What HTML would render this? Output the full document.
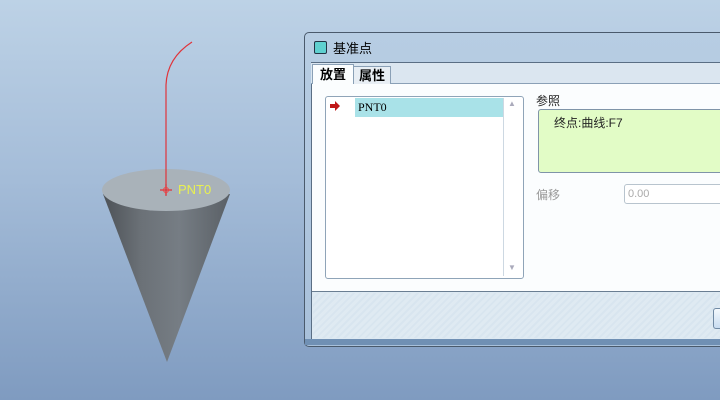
<!DOCTYPE html>
<html><head><meta charset="utf-8"><style>
body{margin:0;width:720px;height:400px;overflow:hidden;position:relative;background:linear-gradient(#bdd2e6 0%,#a4bcd8 45%,#7f9bc0 100%);font-family:"Liberation Sans","Noto Sans CJK SC",sans-serif;}
.a{position:absolute;}
</style></head><body>
<svg class="a" style="left:0;top:0" width="300" height="400">
<defs><linearGradient id="c" x1="0" x2="1"><stop offset="0" stop-color="#4d5257"/><stop offset="0.3" stop-color="#6b7177"/><stop offset="0.6" stop-color="#767d84"/><stop offset="1" stop-color="#5a6066"/></linearGradient></defs>
<path d="M103 194 L167 362 L230 194 Z" fill="url(#c)"/>
<ellipse cx="166" cy="190" rx="64" ry="21" fill="#a9b2b9"/>
<path d="M192 42 Q167 58 166 85 L166 195" stroke="#e0333a" stroke-width="1.2" fill="none"/>
<path d="M160 190 h12 M166 184 v12" stroke="#e0333a" stroke-width="1.2"/>
<circle cx="166" cy="190" r="2.5" fill="none" stroke="#f04040"/>
<text x="178" y="194" font-family="Liberation Sans" font-size="13" fill="#e8f050">PNT0</text>
</svg>
<div class="a" style="left:304px;top:32px;width:420px;height:313px;background:linear-gradient(#b7cde3,#a8c0da);border:1px solid #4a5a6c;border-radius:5px;"></div>
<div class="a" style="left:314px;top:41px;width:11px;height:11px;background:#5fd0d0;border:1px solid #234;border-radius:2px"></div>
<div class="a" style="left:333px;top:38px;font-size:13px;color:#000">基准点</div>
<div class="a" style="left:311px;top:62px;width:415px;height:276px;background:#dde9f2;border:1px solid #5a6e84"></div>
<div class="a" style="left:311px;top:63px;width:415px;height:20px;background:#dbe6f0;border-bottom:1px solid #8aa0b6"></div>
<div class="a" style="left:312px;top:64px;width:40px;height:20px;background:#fbfdfe;border:1px solid #8aa0b6;border-bottom:none;font-size:13px;font-weight:bold;text-align:center;line-height:20px">放置</div>
<div class="a" style="left:353px;top:66px;width:36px;height:17px;background:#e8eef4;border:1px solid #8aa0b6;font-size:13px;font-weight:bold;text-align:center;line-height:17px">属性</div>
<div class="a" style="left:312px;top:84px;width:414px;height:207px;background:#fbfdfe;border-bottom:1px solid #6a7e92"></div>
<div class="a" style="left:325px;top:96px;width:197px;height:181px;background:#fff;border:1px solid #8fa4b8;border-radius:3px"></div>
<div class="a" style="left:355px;top:98px;width:148px;height:19px;background:#a9e2e8;font-family:'Liberation Serif';font-size:12px;line-height:19px;padding-left:3px;box-sizing:border-box">PNT0</div>
<div class="a" style="left:503px;top:98px;width:1px;height:178px;background:#cdd8e2"></div>
<div class="a" style="left:508px;top:99px;font-size:8px;color:#aab">▲</div>
<div class="a" style="left:508px;top:263px;font-size:8px;color:#aab">▼</div>
<svg class="a" style="left:329px;top:100px" width="12" height="12"><path d="M1 4h5V1l5 5-5 5V8H1z" fill="#c01818"/></svg>
<div class="a" style="left:536px;top:92px;font-size:12px;color:#222">参照</div>
<div class="a" style="left:538px;top:109px;width:190px;height:62px;background:#e2fcc6;border:1px solid #7f94a8;border-radius:3px"></div>
<div class="a" style="left:554px;top:114px;font-size:12px;color:#222">终点:曲线:F7</div>
<div class="a" style="left:536px;top:186px;font-size:12px;color:#999">偏移</div>
<div class="a" style="left:624px;top:184px;width:100px;height:18px;border:1px solid #b8c4ce;border-radius:3px;background:#fff;font-size:11px;color:#aaa;line-height:18px;padding-left:3px">0.00</div>
<div class="a" style="left:313px;top:293px;width:413px;height:45px;background:repeating-linear-gradient(135deg,#dfeaf2 0 3px,#d8e5ef 3px 5px)"></div>
<div class="a" style="left:305px;top:339px;width:420px;height:6px;background:#7090b4"></div>
<div class="a" style="left:713px;top:308px;width:20px;height:19px;border:1px solid #708aa4;border-radius:3px;background:linear-gradient(#f4f9fd,#c8dcf0)"></div>
</body></html>
